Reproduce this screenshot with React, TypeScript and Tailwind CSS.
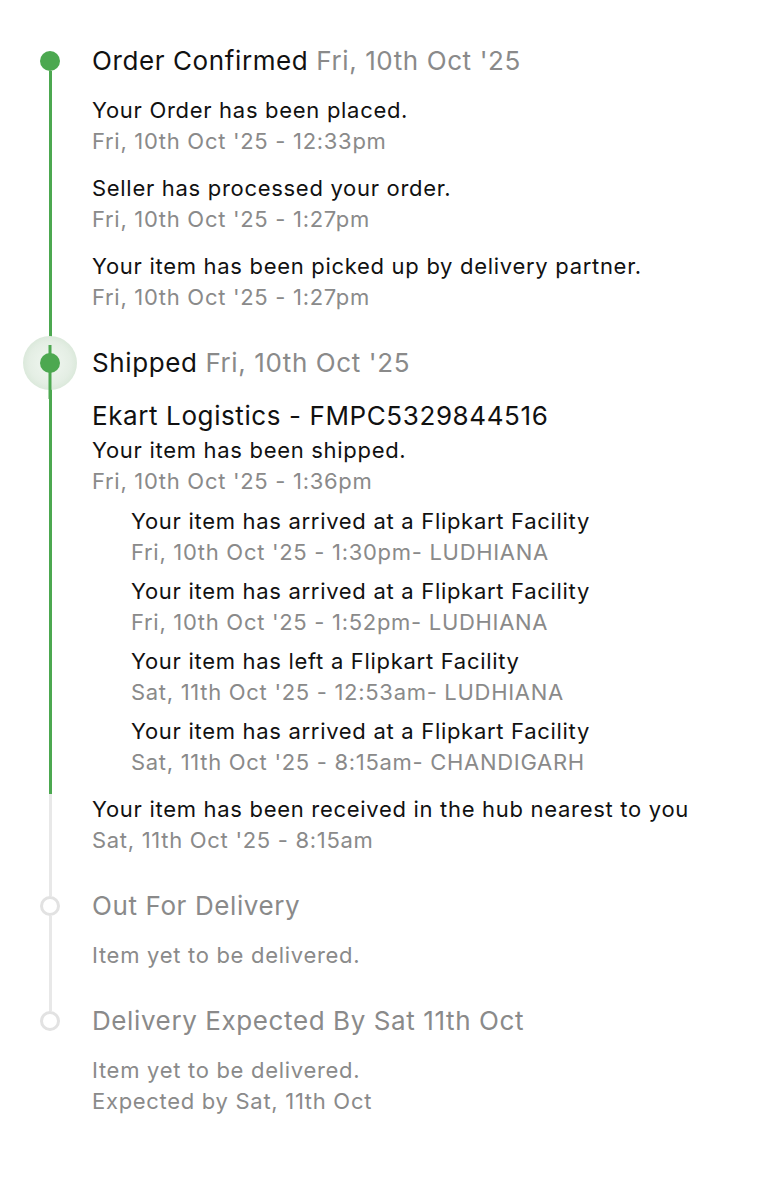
import React from "react";

const GREEN = "bg-[#4ca850]";

type Entry = { title: string; time: string };

function Item({ e, sub = false }: { e: Entry; sub?: boolean }) {
  return (
    <div className={sub ? "ml-[39px]" : ""}>
      <div className="text-[22px] leading-[31px] tracking-[0.7px] text-[#111111]">{e.title}</div>
      <div className="text-[22px] leading-[31px] tracking-[0.7px] text-[#8a8a8a]">{e.time}</div>
    </div>
  );
}

function Rail({ children }: { children: React.ReactNode }) {
  return (
    <div className="ml-[40px] mr-[32px] flex w-[20px] shrink-0 flex-col items-center">
      {children}
    </div>
  );
}

function Line({ color, h }: { color: string; h?: string }) {
  return <div className={`w-[3px] ${color} ${h ?? "flex-1"}`} />;
}

function Dot() {
  return <div className={`h-[20px] w-[20px] shrink-0 rounded-full ${GREEN}`} />;
}

function Hollow() {
  return (
    <div className="h-[20px] w-[20px] shrink-0 rounded-full border-[3px] border-[#e2e2e2] bg-white" />
  );
}

export default function App() {
  const confirmed: Entry[] = [
    { title: "Your Order has been placed.", time: "Fri, 10th Oct '25 - 12:33pm" },
    { title: "Seller has processed your order.", time: "Fri, 10th Oct '25 - 1:27pm" },
    { title: "Your item has been picked up by delivery partner.", time: "Fri, 10th Oct '25 - 1:27pm" },
  ];
  const hops: Entry[] = [
    { title: "Your item has arrived at a Flipkart Facility", time: "Fri, 10th Oct '25 - 1:30pm- LUDHIANA" },
    { title: "Your item has arrived at a Flipkart Facility", time: "Fri, 10th Oct '25 - 1:52pm- LUDHIANA" },
    { title: "Your item has left a Flipkart Facility", time: "Sat, 11th Oct '25 - 12:53am- LUDHIANA" },
    { title: "Your item has arrived at a Flipkart Facility", time: "Sat, 11th Oct '25 - 8:15am- CHANDIGARH" },
  ];

  const heading = "text-[26px] leading-[36px] tracking-[0.6px]";
  const note = "text-[22px] leading-[31px] tracking-[0.7px] text-[#8a8a8a]";

  return (
    <div className="min-h-[1200px] bg-white pt-[43px] font-['Inter','Noto_Sans',sans-serif] antialiased">
      {/* Order Confirmed */}
      <div className="flex">
        <Rail>
          <div className="h-[8px]" />
          <Dot />
          <Line color={GREEN} />
        </Rail>
        <div className="flex flex-col pb-[32px]">
          <div className={`${heading} text-[#111111]`}>
            Order Confirmed <span className="text-[#8a8a8a]">Fri, 10th Oct '25</span>
          </div>
          <div className="mt-[16px] flex flex-col gap-[16px]">
            {confirmed.map((e, i) => (
              <Item key={i} e={e} />
            ))}
          </div>
        </div>
      </div>

      {/* Shipped */}
      <div className="flex">
        <Rail>
          <Line color={GREEN} h="h-[8px]" />
          <div className="relative flex h-[20px] w-[20px] items-center justify-center">
            <div className="absolute left-1/2 top-1/2 h-[54px] w-[54px] -translate-x-1/2 -translate-y-1/2 rounded-full bg-[radial-gradient(circle,#f1f7f1_0%,#e4eee4_55%,#d6e6d6_80%,rgba(214,230,214,0)_100%)]" />
            <div className={`absolute left-1/2 top-[-8px] h-[54px] w-[3px] -translate-x-1/2 ${GREEN}`} />
            <div className={`relative h-[20px] w-[20px] rounded-full ${GREEN}`} />
          </div>
          <Line color={GREEN} />
        </Rail>
        <div className="flex flex-col pb-[16px]">
          <div className={`${heading} text-[#111111]`}>
            Shipped <span className="text-[#8a8a8a]">Fri, 10th Oct '25</span>
          </div>
          <div className={`mt-[17px] ${heading} text-[#111111]`}>
            Ekart Logistics - FMPC5329844516
          </div>
          <div className="mt-[1px]">
            <Item e={{ title: "Your item has been shipped.", time: "Fri, 10th Oct '25 - 1:36pm" }} />
          </div>
          <div className="mt-[9px] flex flex-col gap-[8px]">
            {hops.map((e, i) => (
              <Item key={i} e={e} sub />
            ))}
          </div>
        </div>
      </div>

      {/* Hub arrival */}
      <div className="flex">
        <Rail>
          <Line color="bg-[#e8e8e8]" />
        </Rail>
        <div className="pb-[32px]">
          <Item
            e={{
              title: "Your item has been received in the hub nearest to you",
              time: "Sat, 11th Oct '25 - 8:15am",
            }}
          />
        </div>
      </div>

      {/* Out For Delivery */}
      <div className="flex">
        <Rail>
          <Line color="bg-[#e8e8e8]" h="h-[8px]" />
          <Hollow />
          <Line color="bg-[#e8e8e8]" />
        </Rail>
        <div className="flex flex-col pb-[32px]">
          <div className={`${heading} text-[#8a8a8a]`}>Out For Delivery</div>
          <div className={`mt-[16px] ${note}`}>Item yet to be delivered.</div>
        </div>
      </div>

      {/* Delivery Expected */}
      <div className="flex">
        <Rail>
          <Line color="bg-[#e8e8e8]" h="h-[8px]" />
          <Hollow />
        </Rail>
        <div className="flex flex-col pb-[40px]">
          <div className={`${heading} text-[#8a8a8a]`}>Delivery Expected By Sat 11th Oct</div>
          <div className={`mt-[16px] ${note}`}>Item yet to be delivered.</div>
          <div className={note}>Expected by Sat, 11th Oct</div>
        </div>
      </div>
    </div>
  );
}
